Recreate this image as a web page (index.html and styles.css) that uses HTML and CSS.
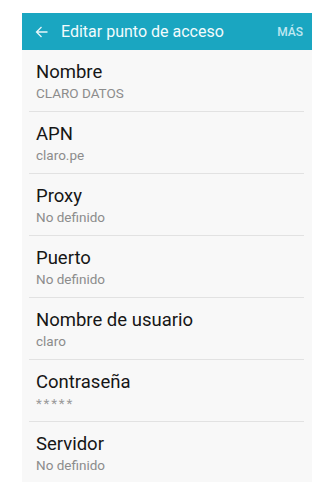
FILE: index.html
```html
<!DOCTYPE html>
<html lang="es">
<head>
<meta charset="utf-8">
<title>Editar punto de acceso</title>
<link rel="stylesheet" href="styles.css">
</head>
<body>
<div class="screen">
  <header class="appbar">
    <svg class="back" width="13" height="12" viewBox="0 0 13 12" aria-hidden="true">
      <path d="M12.5 6H1.5M6.5 1L1.5 6l5 5" fill="none" stroke="#e8f6fa" stroke-width="1.3"/>
    </svg>
    <span class="title">Editar punto de acceso</span>
    <span class="more">MÁS</span>
  </header>
  <ul class="list">
    <li class="item"><span class="label">Nombre</span><span class="value">CLARO DATOS</span></li>
    <li class="item"><span class="label">APN</span><span class="value">claro.pe</span></li>
    <li class="item"><span class="label">Proxy</span><span class="value">No definido</span></li>
    <li class="item"><span class="label">Puerto</span><span class="value">No definido</span></li>
    <li class="item"><span class="label">Nombre de usuario</span><span class="value">claro</span></li>
    <li class="item"><span class="label">Contraseña</span><span class="value masked">*****</span></li>
    <li class="item last"><span class="label">Servidor</span><span class="value">No definido</span></li>
  </ul>
</div>
</body>
</html>
```
FILE: styles.css
```css
html, body {
  margin: 0;
  padding: 0;
  background: #ffffff;
}
body {
  font-family: Roboto, "Noto Sans", "Liberation Sans", sans-serif;
  padding: 13px 0 0 22px;
}
.screen {
  width: 290px;
  height: 469px;
  background: #f8f8f8;
  overflow: hidden;
}
.appbar {
  height: 37px;
  background: #1aa6c1;
  display: flex;
  align-items: center;
  padding: 0 9px 0 13px;
  box-sizing: border-box;
}
.back {
  flex: none;
  margin-right: 13px;
}
.title {
  flex: 1;
  color: #f2fbfd;
  font-size: 16px;
}
.more {
  color: #bfe8f2;
  font-size: 12px;
  font-weight: 500;
}
.list {
  list-style: none;
  margin: 0;
  padding: 0 8px 0 7px;
}
.item {
  display: flex;
  flex-direction: column;
  height: 50px;
  border-bottom: 1px solid #e2e2e2;
  padding: 11px 0 0 7px;
}
.item.last {
  border-bottom: none;
}
.label {
  font-size: 18.5px;
  line-height: 22px;
  color: #161616;
}
.value {
  font-size: 13.5px;
  line-height: 20px;
  color: #8c8c8c;
}
.value.masked {
  letter-spacing: 1.8px;
  color: #9a9a9a;
}
```
